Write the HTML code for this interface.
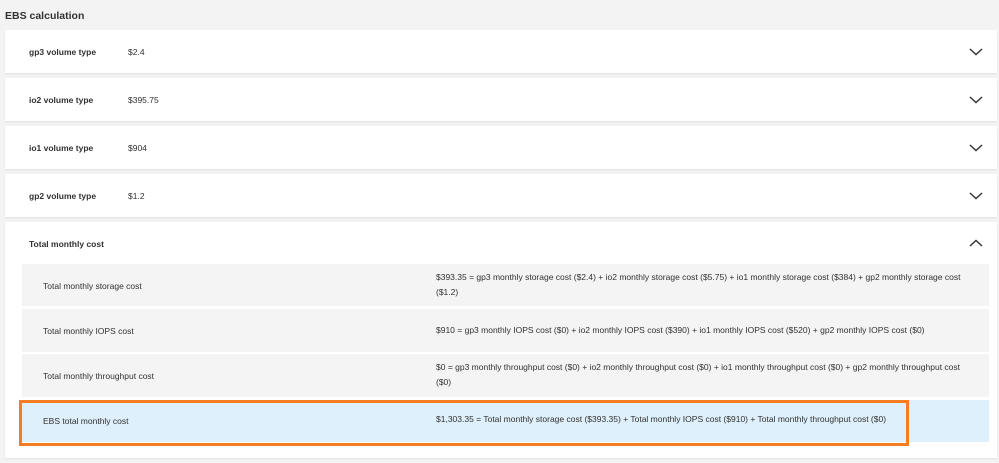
<!DOCTYPE html>
<html><head><style>
body{margin:0;width:999px;height:463px;background:#f3f3f3;font-family:"Liberation Sans",sans-serif;color:#323130;position:relative;overflow:hidden}
.t{position:absolute;left:5px;top:10px;font-size:10.5px;font-weight:bold}
.card{position:absolute;left:5px;width:992px;background:#fff;box-shadow:0 1px 2px rgba(0,0,0,.08)}
.lab{position:absolute;left:24px;font-size:8.5px;font-weight:bold}
.val{position:absolute;left:123px;font-size:8.5px}
svg.ch{position:absolute;left:964px}
.row{position:absolute;left:22px;width:967px;background:#f4f4f4;font-size:8.5px}
.row .a{position:absolute;left:21px}
.row .b{position:absolute;left:414px;width:535px;line-height:15px}
</style></head><body>
<div class="t">EBS calculation</div>
<div class="card" style="top:30px;height:43px"><div class="lab" style="top:17px">gp3 volume type</div><div class="val" style="top:17px">$2.4</div><svg class="ch" style="top:18px" width="14" height="8"><path d="M1 1L7 6.5L13 1" stroke="#323130" stroke-width="1.4" fill="none"/></svg></div>
<div class="card" style="top:78px;height:43px"><div class="lab" style="top:17px">io2 volume type</div><div class="val" style="top:17px">$395.75</div><svg class="ch" style="top:18px" width="14" height="8"><path d="M1 1L7 6.5L13 1" stroke="#323130" stroke-width="1.4" fill="none"/></svg></div>
<div class="card" style="top:126px;height:43px"><div class="lab" style="top:17px">io1 volume type</div><div class="val" style="top:17px">$904</div><svg class="ch" style="top:18px" width="14" height="8"><path d="M1 1L7 6.5L13 1" stroke="#323130" stroke-width="1.4" fill="none"/></svg></div>
<div class="card" style="top:174px;height:43px"><div class="lab" style="top:17px">gp2 volume type</div><div class="val" style="top:17px">$1.2</div><svg class="ch" style="top:18px" width="14" height="8"><path d="M1 1L7 6.5L13 1" stroke="#323130" stroke-width="1.4" fill="none"/></svg></div>
<div class="card" style="top:222px;height:236px"><div class="lab" style="top:17px">Total monthly cost</div><svg class="ch" style="top:17px" width="14" height="8"><path d="M1 7L7 1.5L13 7" stroke="#323130" stroke-width="1.4" fill="none"/></svg></div>
<div class="row" style="top:264px;height:42px"><div class="a" style="top:17px">Total monthly storage cost</div><div class="b" style="top:6px">$393.35 = gp3 monthly storage cost ($2.4) + io2 monthly storage cost ($5.75) + io1 monthly storage cost ($384) + gp2 monthly storage cost ($1.2)</div></div>
<div class="row" style="top:309px;height:43px"><div class="a" style="top:17px">Total monthly IOPS cost</div><div class="b" style="top:14px">$910 = gp3 monthly IOPS cost ($0) + io2 monthly IOPS cost ($390) + io1 monthly IOPS cost ($520) + gp2 monthly IOPS cost ($0)</div></div>
<div class="row" style="top:354px;height:43px"><div class="a" style="top:17px">Total monthly throughput cost</div><div class="b" style="top:6px">$0 = gp3 monthly throughput cost ($0) + io2 monthly throughput cost ($0) + io1 monthly throughput cost ($0) + gp2 monthly throughput cost ($0)</div></div>
<div class="row" style="top:400px;height:42px;background:#def0fb"><div class="a" style="top:16px">EBS total monthly cost</div><div class="b" style="top:12px">$1,303.35 = Total monthly storage cost ($393.35) + Total monthly IOPS cost ($910) + Total monthly throughput cost ($0)</div></div>
<div style="position:absolute;left:19px;top:400px;width:884px;height:40px;border:3px solid #f57c20"></div>
</body></html>
